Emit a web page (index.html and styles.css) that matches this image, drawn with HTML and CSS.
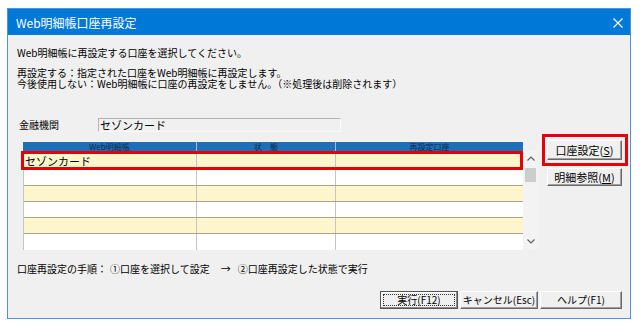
FILE: index.html
```html
<!DOCTYPE html>
<html lang="ja">

<head>
    <meta charset="UTF-8">
    <title>Web明細帳口座再設定</title>
    <link rel="stylesheet" href="styles.css">
</head>

<body>
    <div class="window">
        <!-- Title bar -->
        <div class="titlebar">
            <span class="title">Web明細帳口座再設定</span>
            <svg class="close" width="10" height="10" viewBox="0 0 10 10">
                <path d="M0.5 0.5 L9.5 9.5 M9.5 0.5 L0.5 9.5" stroke="#fff" stroke-width="1.1" fill="none" />
            </svg>
        </div>

        <div class="content">
            <p class="lead">Web明細帳に再設定する口座を選択してください。</p>
            <div class="notes">
                <p>再設定する：指定された口座をWeb明細帳に再設定します。</p>
                <p>今後使用しない：Web明細帳に口座の再設定をしません。（※処理後は削除されます）</p>
            </div>

            <!-- Bank field -->
            <div class="field">
                <span class="field-label">金融機関</span>
                <div class="field-box">セゾンカード</div>
            </div>

            <div class="main">
                <div class="grid-wrap">
                    <div class="grid">
                        <div class="grid-head">
                            <span>Web明細帳</span>
                            <span>状　態</span>
                            <span>再設定口座</span>
                        </div>
                        <div class="grid-body">
                            <div class="row odd selected"><span>セゾンカード</span><span></span><span></span></div>
                            <div class="row"><span></span><span></span><span></span></div>
                            <div class="row odd"><span></span><span></span><span></span></div>
                            <div class="row"><span></span><span></span><span></span></div>
                            <div class="row odd"><span></span><span></span><span></span></div>
                            <div class="row"><span></span><span></span><span></span></div>
                        </div>
                    </div>
                    <div class="scrollbar">
                        <div class="arrow">
                            <svg width="8" height="5" viewBox="0 0 8 5">
                                <path d="M0.5 4.5 L4 1 L7.5 4.5" stroke="#606060" stroke-width="1.2" fill="none" />
                            </svg>
                        </div>
                        <div class="thumb"></div>
                        <div class="arrow arrow-down">
                            <svg width="8" height="5" viewBox="0 0 8 5">
                                <path d="M0.5 0.5 L4 4 L7.5 0.5" stroke="#606060" stroke-width="1.2" fill="none" />
                            </svg>
                        </div>
                    </div>
                </div>

                <div class="side">
                    <div class="mark">
                        <button class="btn side-btn">口座設定(<u>S</u>)</button>
                    </div>
                    <button class="btn side-btn side-second">明細参照(<u>M</u>)</button>
                </div>
            </div>

            <p class="steps">口座再設定の手順：<span class="s1">①口座を選択して設定</span><span class="arrow-r">→</span><span class="s2">②口座再設定した状態で実行</span></p>

            <div class="actions">
                <button class="btn act default"><span class="focus">実行(F12)</span></button>
                <button class="btn act">キャンセル(Esc)</button>
                <button class="btn act wide">ヘルプ(F1)</button>
            </div>
        </div>
    </div>
</body>

</html>
```

FILE: styles.css
```css
/* General reset */
* {
    margin: 0;
    padding: 0;
    box-sizing: border-box;
}

body {
    background: #fff;
    font-family: "Noto Sans CJK JP", "Noto Sans", sans-serif;
    font-size: 10px;
    color: #000;
}

/* Dialog window */
.window {
    width: 624px;
    height: 311px;
    margin: 8px 0 0 7px;
    border: 1px solid #4d94dc;
    background: #f0f0f0;
    display: flex;
    flex-direction: column;
}

.titlebar {
    height: 26px;
    background: #0078d7;
    color: #fff;
    display: flex;
    align-items: center;
    justify-content: space-between;
    padding: 0 7px 0 8px;
    flex-shrink: 0;
}

.title {
    font-size: 12px;
    line-height: 14px;
    margin-top: 1px;
}

.close {
    margin-top: 2px;
}

.content {
    flex: 1;
    display: flex;
    flex-direction: column;
    padding: 12px 2px 0 9px;
}

.lead {
    line-height: 12px;
}

.notes {
    margin-top: 8px;
    line-height: 11px;
}

/* Bank field */
.field {
    margin-top: 29px;
    display: flex;
    align-items: center;
    height: 14px;
}

.field-label {
    width: 81px;
    padding-left: 2px;
    line-height: 12px;
}

.field-box {
    width: 243px;
    height: 14px;
    border: 1px solid;
    border-color: #b4b4b4 #fafafa #fafafa #b4b4b4;
    background: #f0f0f0;
    font-size: 11px;
    line-height: 12px;
    padding-left: 1px;
}

/* Grid + side buttons */
.main {
    margin-top: 2px;
    display: flex;
    height: 115px;
}

.grid-wrap {
    margin-left: 6px;
    display: flex;
    width: 515px;
}

.grid {
    width: 500px;
    padding-top: 8px;
}

.grid-head {
    height: 9px;
    background: #1f6fb6;
    display: grid;
    grid-template-columns: 174px 139px 187px;
}

.grid-head span {
    color: #0d2a52;
    font-size: 8px;
    line-height: 9px;
    text-align: center;
    border-right: 1px solid rgba(255, 255, 255, 0.55);
}

.grid-head span:last-child {
    border-right: none;
}

.grid-body {
    margin-top: 3px;
    border-left: 1px solid #c4c4c4;
}

.row {
    display: grid;
    grid-template-columns: 173px 139px 187px;
    height: 16px;
    border-bottom: 1px solid #aaa48a;
    background: #fff;
    position: relative;
}

.row:last-child {
    border-bottom: none;
}

.row.odd {
    background: #fdf6cc;
}

.row span {
    border-right: 1px solid #c4c4c4;
    font-size: 11px;
    line-height: 15px;
    padding-left: 1px;
    white-space: nowrap;
}

.row span:last-child {
    border-right: none;
}

/* Red marker round the chosen row */
.row.selected::after {
    content: "";
    position: absolute;
    top: -3px;
    left: -3px;
    right: 0;
    bottom: -1px;
    border: 3px solid #e5000a;
}

.scrollbar {
    width: 15px;
    margin-top: 17px;
    background: #f3f3f3;
    display: flex;
    flex-direction: column;
    align-items: center;
}

.arrow {
    height: 15px;
    width: 15px;
    display: flex;
    align-items: center;
    justify-content: center;
}

.arrow-down {
    margin-top: auto;
}

.thumb {
    width: 11px;
    height: 14px;
    margin-top: 2px;
    background: #cdcdcd;
}

.side {
    margin-left: 4px;
    display: flex;
    flex-direction: column;
}

.mark {
    width: 86px;
    height: 32px;
    border: 3px solid #e5000a;
    padding: 3px 0 0 2px;
}

/* Classic 3D buttons */
.btn {
    font-family: "Noto Sans CJK JP", "Noto Sans", sans-serif;
    background: #f0f0f0;
    color: #000;
    border: 1px solid;
    border-color: #fff #696969 #696969 #fff;
    box-shadow: inset -1px -1px 0 #a0a0a0;
    display: flex;
    align-items: center;
    justify-content: center;
    cursor: pointer;
}

.side-btn {
    width: 75px;
    height: 20px;
    font-size: 11px;
    line-height: 12px;
}

.side-second {
    height: 18px;
    margin: 2px 0 0 5px;
}

.steps {
    margin-top: 14px;
    line-height: 12px;
}

.steps .s1 {
    margin-left: 3px;
}

.steps .arrow-r {
    margin: 0 7px 0 11px;
}

.actions {
    margin-top: 16px;
    display: flex;
    justify-content: flex-end;
    gap: 2px;
    padding-right: 6px;
}

.act {
    width: 78px;
    height: 18px;
    font-size: 10px;
    line-height: 12px;
}

.act.wide {
    width: 82px;
}

.act.default {
    border-color: #555;
    box-shadow: inset -1px -1px 0 #8a8a8a, inset 1px 1px 0 #fff;
    padding: 2px;
}

.focus {
    width: 100%;
    height: 100%;
    border: 1px dotted #333;
    display: flex;
    align-items: center;
    justify-content: center;
}
```
